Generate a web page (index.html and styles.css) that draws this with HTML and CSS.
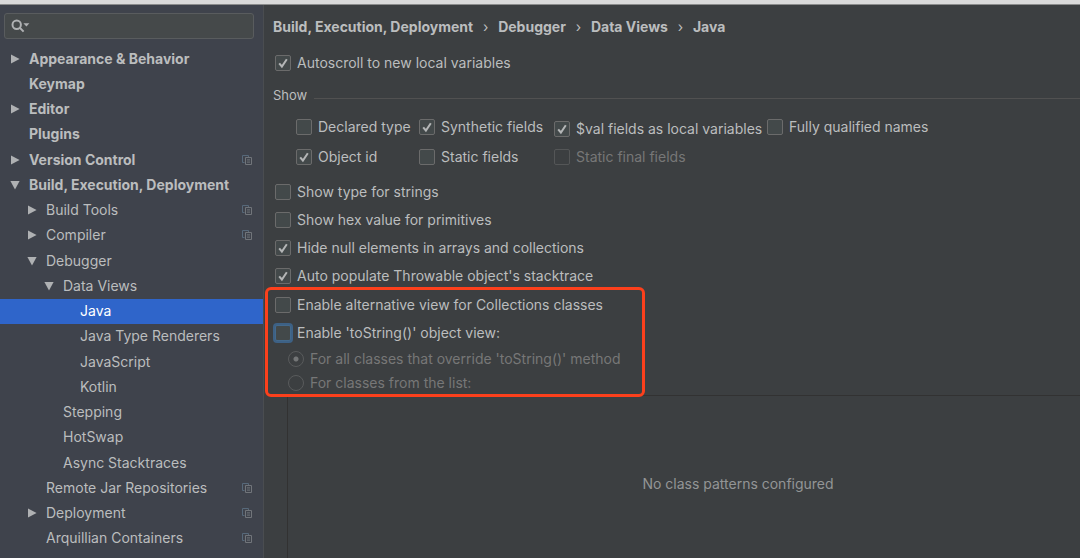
FILE: index.html
```html
<!DOCTYPE html>
<html lang="en">
<head>
<meta charset="utf-8">
<meta name="viewport" content="width=device-width, initial-scale=1">
<title>Preferences</title>
<link rel="stylesheet" href="styles.css">
</head>
<body>
<svg class="defs" aria-hidden="true">
  <symbol id="right" viewBox="0 0 10 10"><path d="M1 .4 9.6 5 1 9.6z"/></symbol>
  <symbol id="down" viewBox="0 0 10 10"><path d="M.4 1h9.2L5 9.6z"/></symbol>
  <symbol id="copy" viewBox="0 0 10 10"><path d="M2.5 7.5h-2v-7h6v2" stroke="#57697a"/><path d="M3.5 2.5h6v7h-6zM5 4.9h3M5 7.1h3" stroke="#71757a"/></symbol>
  <symbol id="check" viewBox="0 0 16 16"><path d="m4.2 8.3 2.7 3.2 4.9-7.3"/></symbol>
</svg>
<div class="titlebar"></div>
<div class="window">
  <aside class="sidebar">
    <div class="search">
      <svg class="search-icon" viewBox="0 0 20 14" aria-hidden="true"><circle cx="5.7" cy="5.7" r="4.2"/><path class="handle" d="m8.8 8.8 3.8 3.8"/><path class="caret" d="M12.4 4.2h6l-3 3.4z"/></svg>
      <input class="search-input" type="text" aria-label="Search settings">
    </div>
    <nav class="tree" aria-label="Settings">
      <a class="node top" href="#"><svg class="arrow"><use href="#right"/></svg><span class="name">Appearance &amp; Behavior</span></a>
      <a class="node top" href="#"><span class="arrow"></span><span class="name">Keymap</span></a>
      <a class="node top" href="#"><svg class="arrow"><use href="#right"/></svg><span class="name">Editor</span></a>
      <a class="node top" href="#"><span class="arrow"></span><span class="name">Plugins</span></a>
      <a class="node top" href="#"><svg class="arrow"><use href="#right"/></svg><span class="name">Version Control</span><svg class="copy"><use href="#copy"/></svg></a>
      <a class="node top" href="#"><svg class="arrow"><use href="#down"/></svg><span class="name">Build, Execution, Deployment</span></a>
      <a class="node level-1" href="#"><svg class="arrow"><use href="#right"/></svg><span class="name">Build Tools</span><svg class="copy"><use href="#copy"/></svg></a>
      <a class="node level-1" href="#"><svg class="arrow"><use href="#right"/></svg><span class="name">Compiler</span><svg class="copy"><use href="#copy"/></svg></a>
      <a class="node level-1" href="#"><svg class="arrow"><use href="#down"/></svg><span class="name">Debugger</span></a>
      <a class="node level-2" href="#"><svg class="arrow"><use href="#down"/></svg><span class="name">Data Views</span></a>
      <a class="node level-3 selected" href="#" aria-current="page"><span class="arrow"></span><span class="name">Java</span></a>
      <a class="node level-3" href="#"><span class="arrow"></span><span class="name">Java Type Renderers</span></a>
      <a class="node level-3" href="#"><span class="arrow"></span><span class="name">JavaScript</span></a>
      <a class="node level-3" href="#"><span class="arrow"></span><span class="name">Kotlin</span></a>
      <a class="node level-2" href="#"><span class="arrow"></span><span class="name">Stepping</span></a>
      <a class="node level-2" href="#"><span class="arrow"></span><span class="name">HotSwap</span></a>
      <a class="node level-2" href="#"><span class="arrow"></span><span class="name">Async Stacktraces</span></a>
      <a class="node level-1" href="#"><span class="arrow"></span><span class="name">Remote Jar Repositories</span><svg class="copy"><use href="#copy"/></svg></a>
      <a class="node level-1" href="#"><svg class="arrow"><use href="#right"/></svg><span class="name">Deployment</span><svg class="copy"><use href="#copy"/></svg></a>
      <a class="node level-1" href="#"><span class="arrow"></span><span class="name">Arquillian Containers</span><svg class="copy"><use href="#copy"/></svg></a>
    </nav>
  </aside>
  <main class="content">
    <nav class="crumbs" aria-label="Breadcrumb">
      <a href="#">Build, Execution, Deployment</a><span class="sep">›</span><a href="#">Debugger</a><span class="sep">›</span><a href="#">Data Views</a><span class="sep">›</span><a href="#">Java</a>
    </nav>
    <label class="option autoscroll"><span class="box"><input type="checkbox" checked><svg class="check"><use href="#check"/></svg></span>Autoscroll to new local variables</label>
    <section class="show">
      <h2 class="show-title">Show</h2>
      <div class="show-grid">
        <label class="option"><span class="box"><input type="checkbox"><svg class="check"><use href="#check"/></svg></span>Declared type</label>
        <label class="option"><span class="box"><input type="checkbox" checked><svg class="check"><use href="#check"/></svg></span>Synthetic fields</label>
        <label class="option lowered"><span class="box"><input type="checkbox" checked><svg class="check"><use href="#check"/></svg></span>$val fields as local variables</label>
        <label class="option"><span class="box"><input type="checkbox"><svg class="check"><use href="#check"/></svg></span>Fully qualified names</label>
        <label class="option"><span class="box"><input type="checkbox" checked><svg class="check"><use href="#check"/></svg></span>Object id</label>
        <label class="option"><span class="box"><input type="checkbox"><svg class="check"><use href="#check"/></svg></span>Static fields</label>
        <label class="option disabled"><span class="box"><input type="checkbox" disabled><svg class="check"><use href="#check"/></svg></span>Static final fields</label>
      </div>
    </section>
    <div class="options">
      <label class="option"><span class="box"><input type="checkbox"><svg class="check"><use href="#check"/></svg></span>Show type for strings</label>
      <label class="option"><span class="box"><input type="checkbox"><svg class="check"><use href="#check"/></svg></span>Show hex value for primitives</label>
      <label class="option"><span class="box"><input type="checkbox" checked><svg class="check"><use href="#check"/></svg></span>Hide null elements in arrays and collections</label>
      <label class="option"><span class="box"><input type="checkbox" checked><svg class="check"><use href="#check"/></svg></span>Auto populate Throwable object's stacktrace</label>
    </div>
    <div class="options views">
      <label class="option"><span class="box"><input type="checkbox"><svg class="check"><use href="#check"/></svg></span>Enable alternative view for Collections classes</label>
      <label class="option"><span class="box"><input class="focused" type="checkbox"><svg class="check"><use href="#check"/></svg></span>Enable 'toString()' object view:</label>
      <div class="radios">
        <label class="radio-option"><input type="radio" name="scope" checked disabled>For all classes that override 'toString()' method</label>
        <label class="radio-option"><input type="radio" name="scope" disabled>For classes from the list:</label>
      </div>
      <div class="highlight"></div>
    </div>
    <div class="patterns">No class patterns configured</div>
  </main>
</div>
</body>
</html>
```
FILE: styles.css
```css
* { box-sizing: border-box; }

body {
  margin: 0;
  min-height: 100vh;
  display: flex;
  flex-direction: column;
  background: #3c3f41;
  color: #bbbdbe;
  font: 14px/20px Inter, "Liberation Sans", sans-serif;
}

a { color: inherit; text-decoration: none; }
.defs { display: none; }

.titlebar { height: 5px; background: #dadada; border-bottom: 1px solid #8b8c8c; }

.window { flex: 1; display: flex; }

/* Sidebar */
.sidebar {
  flex: 0 0 263px;
  display: flex;
  flex-direction: column;
  padding: 8px 0 7px;
  background: #3f434c;
  border-right: 1px solid #4a4d50;
}

.search {
  display: flex;
  align-items: center;
  height: 26px;
  margin: 0 9px 7px 4px;
  padding-left: 6px;
  background: #45494a;
  border: 1px solid #595c5e;
  border-radius: 3px;
}
.search-icon { width: 20px; height: 14px; fill: none; stroke: #afb1b3; stroke-width: 2; }
.search-icon .caret { fill: #afb1b3; stroke: none; }
.search-input {
  flex: 1;
  min-width: 0;
  border: 0;
  outline: 0;
  background: transparent;
  color: inherit;
  font: inherit;
}

.tree { flex: 1; display: grid; grid-auto-rows: 1fr; }
.node { display: flex; align-items: center; padding: 0 11px 0 10px; white-space: nowrap; }
.top { font-weight: 700; }
.level-1 { padding-left: 27px; }
.level-2 { padding-left: 44px; }
.level-3 { padding-left: 61px; }
.selected { background: #2f65ca; color: #fff; }
.arrow { flex: none; width: 10px; height: 10px; margin-right: 9px; fill: #afb1b3; }
.name { flex: 1; }
.copy { flex: none; width: 10px; height: 10px; fill: none; }

/* Content */
.content { flex: 1; min-width: 0; display: flex; flex-direction: column; padding: 12px 0 0 9px; }

.crumbs { display: flex; font-weight: 700; white-space: nowrap; }
.sep { width: 25px; text-align: center; font-weight: 400; }

.option { display: flex; align-items: center; gap: 6px; white-space: nowrap; }
.box { display: grid; }
.box > * { grid-area: 1 / 1; }
.box input {
  appearance: none;
  width: 16px;
  height: 16px;
  margin: 0;
  background: #43494a;
  border: 1px solid #6b6b6b;
  border-radius: 2px;
}
.box input:disabled { background: transparent; border-color: #545657; }
.box .focused { border-color: #43698c; box-shadow: 0 0 0 2px #3d6185; }
.check {
  width: 16px;
  height: 16px;
  fill: none;
  stroke: #b4b6b7;
  stroke-width: 2;
  visibility: hidden;
  pointer-events: none;
}
input:checked + .check { visibility: visible; }
.disabled, .radio-option { color: #777777; }

.autoscroll { margin-top: 16px; padding-left: 2px; }

.show { margin-top: 12px; }
.show-title { display: flex; align-items: center; gap: 7px; margin: 0; font: inherit; font-size: 13px; }
.show-title::after { content: ""; flex: 1; height: 1px; margin-top: 6px; background: #515151; }
.show-grid {
  display: grid;
  grid-template-columns: 123px 135px 213px 1fr;
  grid-auto-rows: 30px;
  padding: 7px 0 0 23px;
}
.lowered { padding-top: 4px; }

.options { display: grid; grid-auto-rows: 28px; padding-left: 2px; }
.show + .options { margin-top: 6px; }
.views { position: relative; grid-template-rows: 28px 28px auto; margin-top: 1px; }
.radios { display: grid; grid-auto-rows: 24px; padding-left: 13px; }
.radio-option { display: flex; align-items: center; gap: 6px; white-space: nowrap; }
.radio-option input {
  appearance: none;
  width: 16px;
  height: 16px;
  margin: 0;
  border: 1px solid #595b5c;
  border-radius: 50%;
}
.radio-option input:checked { background: radial-gradient(circle, #747677 0 2px, transparent 3px); }
.highlight {
  position: absolute;
  top: -4px;
  left: -8px;
  width: 380px;
  bottom: -2px;
  border: 3px solid #fc401c;
  border-radius: 6px;
  pointer-events: none;
}

.patterns {
  flex: 1;
  display: grid;
  place-items: center;
  margin-left: 14px;
  padding: 14px 0 0 108px;
  border: solid #323232;
  border-width: 1px 0 0 1px;
  color: #939596;
}
```
